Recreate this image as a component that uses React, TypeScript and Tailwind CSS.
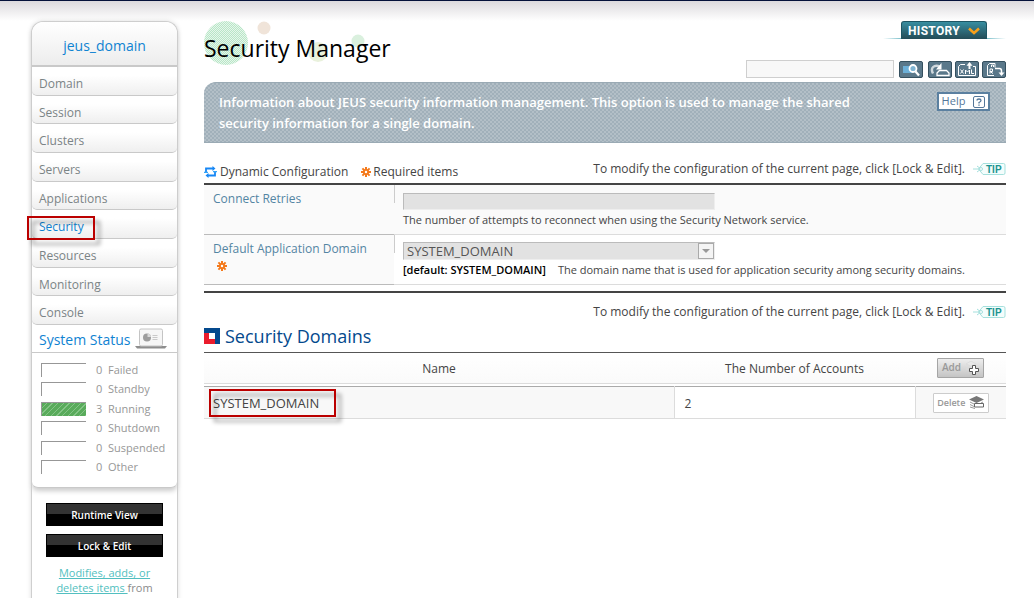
import React, { useState } from 'react';
import clsx from 'clsx';

const MENU = ['Domain', 'Session', 'Clusters', 'Servers', 'Applications', 'Security', 'Resources', 'Monitoring', 'Console'];

const STATUS = [
  { label: 'Failed', count: 0 },
  { label: 'Standby', count: 0 },
  { label: 'Running', count: 3 },
  { label: 'Shutdown', count: 0 },
  { label: 'Suspended', count: 0 },
  { label: 'Other', count: 0 },
];

function GearMark() {
  return (
    <svg viewBox="0 0 10 10" className="h-[10px] w-[10px] shrink-0" aria-hidden="true">
      <g stroke="#f47a1c" strokeWidth="2">
        <path d="M5 0v10M0 5h10M1.4 1.4l7.2 7.2M8.6 1.4L1.4 8.6" />
      </g>
      <circle cx="5" cy="5" r="3" fill="#f47a1c" />
      <circle cx="5" cy="5" r="1.2" fill="#fff" />
    </svg>
  );
}

function DynamicIcon() {
  return (
    <svg viewBox="0 0 13 12" className="h-3 w-[13px] shrink-0" fill="none" aria-hidden="true">
      <path d="M2 6.500V2.500h7M11 5.500v4H4" stroke="#1787f5" strokeWidth="1.800" />
      <path d="M8.500 0L11.500 2.500 8.500 5zM4.500 7L1.500 9.500l3 2.500z" fill="#1787f5" />
      <path d="M0 6.300h4M9 5.700h4" stroke="#35a5f8" strokeWidth="1.300" />
    </svg>
  );
}

function TipBadge() {
  return (
    <svg viewBox="0 0 33 14" className="h-[14px] w-[33px] shrink-0" role="img" aria-label="TIP">
      <path d="M10 1.5h20.5a1.5 1.5 0 0 1 1.500 1.500v8a1.500 1.500 0 0 1-1.500 1.500H10L5.500 7z" fill="#f4fdfc" stroke="#a5e0dd" />
      <path d="M0 7h8M4 4l4 3-4 3" fill="none" stroke="#a5e0dd" />
      <circle cx="8" cy="7" r="1.500" fill="#fff" stroke="#a5e0dd" />
      <text x="13" y="11" fontSize="10" fontWeight="bold" fontFamily="Liberation Sans, sans-serif" fill="#1d9490">TIP</text>
    </svg>
  );
}

function TipLine() {
  return (
    <p className="flex items-center gap-2 text-xs leading-4">
      To modify the configuration of the current page, click [Lock &amp; Edit].
      <TipBadge />
    </p>
  );
}

function ToolButton({ label, children }: { label: string; children: React.ReactNode }) {
  return (
    <button
      aria-label={label}
      title={label}
      className="h-[17px] w-6 rounded-[2px] border border-[#35505f] bg-[#5a788a] cursor-pointer"
    >
      <svg viewBox="0 0 22 15" className="block h-[15px] w-[22px]" fill="none" aria-hidden="true">
        {children}
      </svg>
    </button>
  );
}

function Toolbar() {
  return (
    <div className="flex items-center">
      <input
        type="text"
        aria-label="Search"
        className="h-[18px] w-[148px] border border-[#cfcfcf] bg-[#f8f8f8] px-1 text-xs outline-none"
      />
      <div className="ml-[5px] flex items-center gap-[3px]">
        <div className="mr-[2px] flex">
          <ToolButton label="Search">
            <path d="M3 4h10v7H3z" fill="#6cb0d8" />
            <circle cx="13" cy="6.500" r="3.500" fill="#7fb4d2" stroke="#fff" strokeWidth="1.800" />
            <path d="M15.500 9.500l3.500 4" stroke="#fff" strokeWidth="2.200" />
          </ToolButton>
        </div>
        <ToolButton label="Reload">
          <path d="M4 11.500C1 6 5 2 11 4.500" stroke="#cfd8dd" strokeWidth="2.400" />
          <path d="M12.500 1v6.500H7z" fill="#fff" />
          <path d="M10.500 8.500h7l2.500 2.500v2.500H8V11z" stroke="#fff" strokeWidth="1.300" />
        </ToolButton>
        <ToolButton label="Export XML">
          <path d="M9 2.500H4.500L2.500 4.500v9h17v-9H17" stroke="#fff" />
          <path d="M13.500 7V3" stroke="#fff" strokeWidth="2" />
          <path d="M10.500 3.800L13.500 0l3 3.800z" fill="#fff" />
          <path d="M4.500 7.500l3 4M7.500 7.500l-3 4M9.500 12V8l2 2 2-2v4M15.500 7.500v4h2.500" stroke="#fff" />
        </ToolButton>
        <ToolButton label="Convert">
          <path d="M11 13.500H4.500v-10L6.500 1.500H12v4" stroke="#fff" />
          <path d="M7 11.500V7h2.500v2.500H7l3 2M8.500 5V3h2v2" stroke="#fff" />
          <path d="M12 6.500h4.500q2 0 2 2.500v2" stroke="#fff" strokeWidth="1.500" />
          <path d="M15.500 10.500h6l-3 3.500z" fill="#fff" />
        </ToolButton>
      </div>
    </div>
  );
}

function Sidebar() {
  const [active, setActive] = useState('Security');

  return (
    <aside className="w-[147px] shrink-0 self-stretch rounded-t-xl border border-b-0 border-[#cfcfcf] bg-white shadow-[0_0_5px_#ddd]">
      <div className="rounded-t-xl rounded-b-md border-b border-[#c9c9c9] bg-white shadow-[0_3px_5px_#ccc]">
        <h2 className="h-[45px] rounded-t-xl border-b-2 border-[#c9c9c9] bg-gradient-to-b from-white to-[#ededed] text-center text-sm leading-[47px] text-[#0f83d2]">
          jeus_domain
        </h2>
        <nav className="flex h-[258px] flex-col">
          {MENU.map(item => (
            <a
              key={item}
              href={`#${item.toLowerCase()}`}
              onClick={() => setActive(item)}
              className={clsx(
                'relative flex flex-1 items-center rounded-b-[5px] border-b border-[#c9c9c9] bg-gradient-to-b from-white from-30% to-[#efefef] pl-[7px] pt-[6px] text-xs font-medium',
                item === active ? 'text-[#0f83d2]' : 'text-[#7b8486]'
              )}
            >
              {item}
              {item === active && (
                <span className="absolute -left-[5px] top-[6px] z-10 h-6 w-[68px] border-2 border-[#bb0000] drop-shadow-[5px_5px_2px_#0006]" />
              )}
            </a>
          ))}
        </nav>

        <div className="flex h-7 items-center justify-between border-b border-[#c9c9c9] pl-[7px] pr-[10px]">
          <h3 className="pt-[2px] text-sm text-[#0f83d2]">System Status</h3>
          <button aria-label="Status chart" className="cursor-pointer">
            <svg viewBox="0 0 32 21" className="h-[21px] w-8" aria-hidden="true">
              <path d="M0 18h32l-2 2.500H2z" fill="#8d8d8d" />
              <rect x="4.500" y="1" width="23" height="17" rx="1.500" fill="#f6f6f6" stroke="#c4c4c4" />
              <circle cx="12" cy="9.500" r="4" fill="#9d9d9d" />
              <path d="M12.500 9V5.500A4 4 0 0 1 16 9z" fill="#d9d9d9" />
              <path d="M17.500 7.500h5M17.500 9.500h5M17.500 11.500h5" stroke="#c9c9c9" />
            </svg>
          </button>
        </div>

        <ul className="flex h-[134px] flex-col justify-between pb-3 pl-[9px] pt-[9px] text-[11px] leading-4 text-[#979797]">
          {STATUS.map(({ label, count }) => (
            <li key={label} className="flex h-4 items-center">
              <span
                className={clsx(
                  'h-[14px] w-[45px] border-l border-t border-[#979797]',
                  count > 0 && 'bg-[repeating-linear-gradient(135deg,#59ab5b_0_3px,#84c486_3px_4px)]'
                )}
              />
              <span className="w-[22px] pl-[10px]">{count}</span>
              {label}
            </li>
          ))}
        </ul>
      </div>

      <div className="flex flex-col items-center gap-2 px-[14px] pt-[15px]">
        {['Runtime View', 'Lock & Edit'].map(text => (
          <button
            key={text}
            className="h-[23px] w-full cursor-pointer border border-black bg-[linear-gradient(#333_50%,#000_50%)] text-[10px] font-semibold leading-[22px] text-white"
          >
            {text}
          </button>
        ))}
        <p className="px-2 text-center text-[11px] leading-[15px] text-[#8b8b8b]">
          <a href="#lock" className="text-[#52bfc0] underline">Modifies, adds, or deletes items </a>
          from the domain.
        </p>
      </div>
    </aside>
  );
}

function PageHeader() {
  return (
    <header className="flex justify-between">
      <div className="relative pt-[11px]">
        <svg viewBox="0 0 170 46" className="absolute left-0 top-0 h-[46px] w-[170px]" aria-hidden="true">
          <defs>
            <pattern id="dots" width="2" height="2" patternUnits="userSpaceOnUse">
              <path d="M0 0h2v2H0z" fill="#e6f6eb" />
              <path d="M0 0h1v1H0zM1 1h1v1H1z" fill="#b8e6c7" />
            </pattern>
          </defs>
          <circle cx="22" cy="22" r="22" fill="url(#dots)" />
          <circle cx="60" cy="7" r="6.500" fill="#f0e4d9" />
          <circle cx="114" cy="31" r="10" fill="#e9f1dc" />
          <circle cx="154" cy="20" r="6.500" fill="#daf0de" />
        </svg>
        <h1 className="relative text-[23px] leading-8 text-black">Security Manager</h1>
      </div>
      <div className="flex flex-col items-end">
        <div className="flex items-end">
          <span className="h-px w-[18px] bg-gradient-to-r from-transparent to-[#7cc0cb]" />
          <button className="flex h-[18px] w-[86px] cursor-pointer items-center justify-center gap-2 rounded-t-[3px] border border-b-0 border-[#1d5664] bg-gradient-to-b from-[#378ea1] to-[#244c57] font-['Roboto',sans-serif] text-xs font-bold tracking-wide text-white">
            HISTORY
            <svg viewBox="0 0 12 8" className="h-2 w-3" fill="none" aria-hidden="true">
              <path d="M1 1.500l5 4.500 5-4.500" stroke="#f9a01b" strokeWidth="2.500" />
            </svg>
          </button>
          <span className="h-px w-[19px] bg-gradient-to-l from-transparent to-[#7cc0cb]" />
        </div>
        <div className="pt-[21px]">
          <Toolbar />
        </div>
      </div>
    </header>
  );
}

function SettingsTable() {
  return (
    <table className="mt-[3px] w-full table-fixed border-collapse border-y-2 border-[#444] text-xs">
      <colgroup>
        <col className="w-[190px]" />
        <col />
      </colgroup>
      <tbody>
        <tr className="h-[50px] border-b border-[#dcdcdc] bg-[#fafafa] align-top">
          <th className="border-b border-[#bbb] px-[9px] pt-[6px] text-left font-medium leading-4 text-[#5385a3]">
            <label htmlFor="retries">Connect Retries</label>
          </th>
          <td className="bg-[linear-gradient(#ccc,#ccc)] bg-[length:1px_18px] bg-no-repeat pl-[9px] pt-2">
            <input id="retries" disabled className="block h-[17px] w-[312px] border border-b-[#eee] border-l-[#bbb] border-r-[#eee] border-t-[#bbb] bg-[#e2e2e2] px-1" />
            <p className="pt-[2px] text-[11px] leading-4">The number of attempts to reconnect when using the Security Network service.</p>
          </td>
        </tr>
        <tr className="h-[50px] border-b border-[#dcdcdc] align-top">
          <th className="border-b border-[#bbb] bg-[#fafafa] px-[9px] pt-[6px] text-left font-medium leading-4 text-[#5385a3]">
            <label htmlFor="appDomain">Default Application Domain</label>
            <div className="pl-1 pt-1"><GearMark /></div>
          </th>
          <td className="bg-[linear-gradient(#ccc,#ccc)] bg-[length:1px_18px] bg-no-repeat pl-[9px] pt-[7px]">
            <div className="relative w-[312px]">
              <select id="appDomain" disabled className="block h-[18px] w-full appearance-none border border-b-[#eee] border-l-[#bbb] border-r-[#eee] border-t-[#bbb] bg-[#e2e2e2] px-[3px] text-[13px] font-medium leading-4 text-[#555] opacity-100">
                <option>SYSTEM_DOMAIN</option>
              </select>
              <span className="pointer-events-none absolute right-px top-px flex h-4 w-4 items-center justify-center border border-[#aaa] bg-[#f4f4f4]">
                <svg viewBox="0 0 8 4" className="h-1 w-2" aria-hidden="true"><path d="M0 0h8L4 4z" fill="#999" /></svg>
              </span>
            </div>
            <p className="pt-[2px] text-[11px] leading-4">
              <span className="mr-3 font-semibold text-black">[default: SYSTEM_DOMAIN]</span>
              The domain name that is used for application security among security domains.
            </p>
          </td>
        </tr>
        <tr className="h-2"><td colSpan={2} /></tr>
      </tbody>
    </table>
  );
}

function DomainsTable() {
  return (
    <table className="w-full table-fixed border-collapse border-t border-[#555] text-xs">
      <colgroup>
        <col />
        <col className="w-[241px]" />
        <col className="w-[91px]" />
      </colgroup>
      <thead>
        <tr className="h-[31px] border-b border-[#dcdcdc] bg-gradient-to-b from-white to-[#fafafa]">
          <th className="pt-[2px] font-medium">Name</th>
          <th className="pt-[2px] font-medium">The Number of Accounts</th>
          <th className="font-normal">
            <button className="mx-auto flex h-5 w-[47px] cursor-pointer items-center justify-center gap-1 rounded-[1px] border border-[#a5a5a5] bg-gradient-to-b from-[#eee] to-[#c4c4c4] text-[10px] font-semibold text-[#999]">
              Add
              <svg viewBox="0 0 14 14" className="h-[14px] w-[14px]" aria-hidden="true">
                <path d="M1 3l5-3 5 3-5 2zM1 5.500h4M1 8h3" fill="#e8e8e8" stroke="#ddd" />
                <path d="M7.500 4.500h3v3h3v3h-3v3h-3v-3h-3v-3h3z" fill="#fff" stroke="#555" />
              </svg>
            </button>
          </th>
        </tr>
      </thead>
      <tbody>
        <tr className="h-[3px] border-b border-[#aaa]"><td colSpan={3} /></tr>
        <tr className="h-8 border-b border-[#dcdcdc]">
          <td className="bg-[#f8f8f8] pl-[9px] pt-[2px]">
            <span className="relative">
              <a href="#system_domain" className="text-[13px]">SYSTEM_DOMAIN</a>
              <span className="pointer-events-none absolute -left-1 -top-[6px] h-7 w-[127px] border-2 border-[#bb0000] drop-shadow-[5px_5px_2px_#0006]" />
            </span>
          </td>
          <td className="border-x border-[#dcdcdc] pl-[10px] pt-[2px]">2</td>
          <td className="bg-[#f8f8f8]">
            <button className="mx-auto flex h-5 w-14 cursor-pointer items-center justify-center gap-1 rounded-[1px] border border-[#ccc] bg-white text-[9px] font-semibold text-[#999]">
              Delete
              <svg viewBox="0 0 15 13" className="h-[13px] w-[15px]" aria-hidden="true">
                <path d="M0 3.500L7.500 0 15 3.500 7.500 7z" fill="#777" />
                <path d="M1 6l4 2M1 8.500l4 2M1 11l5 1.500M14 6l-2 1" stroke="#999" fill="none" />
                <path d="M5.500 7.500h9v3.500h-9z" fill="#fff" stroke="#666" />
              </svg>
            </button>
          </td>
        </tr>
      </tbody>
    </table>
  );
}

export default function App() {
  return (
    <div className="h-screen overflow-hidden border-t border-[#05123a] bg-[linear-gradient(#dcdadd,#fff)] bg-[length:100%_20px] bg-no-repeat font-['Open_Sans','Noto_Sans_CJK_KR',sans-serif] text-[#444]">
      <div className="flex min-h-full gap-[26px] pl-[31px] pr-7 pt-[20px]">
        <Sidebar />
        <main className="min-w-0 flex-1">
          <PageHeader />

          <section className="mt-1 flex items-start justify-between rounded-tl-xl border-y border-[#9aaab4] bg-[#b3bfc7] bg-[conic-gradient(#a1b0ba_25%,transparent_0_50%,#a1b0ba_0_75%,transparent_0)] bg-[length:4px_4px] pb-2 pl-[15px] pr-4 pt-[9px]">
            <p className="max-w-[660px] text-[13px] font-semibold leading-[21px] text-white">
              Information about JEUS security information management. This option is used to manage the shared security information for a single domain.
            </p>
            <button className="flex h-[19px] w-[53px] cursor-pointer items-center justify-center gap-2 border-2 border-[#5b80a0] bg-white text-[11px] text-[#54779a]">
              Help
              <svg viewBox="0 0 12 12" className="h-3 w-3" fill="none" stroke="#54779a" aria-hidden="true">
                <rect x="0.500" y="0.500" width="11" height="11" rx="1.500" />
                <path d="M4 4.500Q4 3 6 3t2 1.500Q8 5.500 6 6.500v1M6 8.500v1.200" strokeWidth="1.300" />
              </svg>
            </button>
          </section>

          <div className="mt-[18px] flex h-[19px] items-start justify-between">
            <div className="flex items-center gap-[13px] self-end text-xs leading-4">
              <span className="flex items-center gap-[3px]"><DynamicIcon />Dynamic Configuration</span>
              <span className="flex items-center gap-[2px]"><GearMark />Required items</span>
            </div>
            <TipLine />
          </div>

          <SettingsTable />

          <div className="mt-[11px] flex justify-end">
            <TipLine />
          </div>

          <h2 className="flex h-8 items-center gap-[5px] text-lg font-medium text-[#04498d]">
            <svg viewBox="0 0 16 16" className="h-4 w-4" aria-hidden="true">
              <path d="M0 0h16v16H0z" fill="#04498d" />
              <path d="M0 5h5v6h6v5H0z" fill="#ea1c2c" />
              <path d="M5 5h6v6H5z" fill="#fff" />
            </svg>
            Security Domains
          </h2>
          <DomainsTable />
        </main>
      </div>
    </div>
  );
}
